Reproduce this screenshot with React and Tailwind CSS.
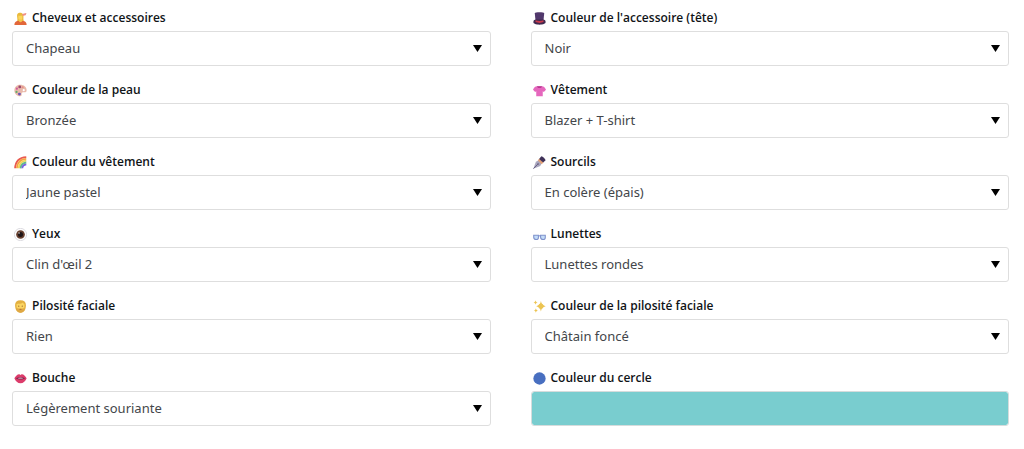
import { useId, useState } from "react";

function Icon({ children }) {
  return (
    <svg viewBox="0 0 36 36" className="size-[13px] shrink-0" aria-hidden="true">{children}</svg>
  );
}

function HaircutIcon() {
  return (
    <Icon>
      <path d="M1 36c0-8 4-11 10-12h14c6 1 10 4 10 12z" fill="#e2673a" />
      <path d="M9 6c4-6 14-5 16 1 2 5 1 9 1 13l1 5H9c2-6-2-14 0-19z" fill="#e9b93c" />
      <path d="M12 10c3 1 9 1 11-1v8c0 4-2 6-5 6s-6-3-6-6z" fill="#fbd65b" />
      <path d="M14 21h8v5c-2 3-6 3-8 0z" fill="#f3c64f" />
      <path d="M23 7l11-3M24 10l9-3" stroke="#ef8f86" strokeWidth="3" />
    </Icon>
  );
}

function HatIcon() {
  return (
    <Icon>
      <path d="M5 4c0-4 26-4 26 0l-2 20H7z" fill="#51386c" />
      <path d="M1 28c0-5 4-7 7-7h20c3 0 7 2 7 7 0 5-7 7-17 7S1 33 1 28z" fill="#41294f" />
      <path d="M7 23c6 3 16 3 22 0v5c-6 3-16 3-22 0z" fill="#c93a4d" />
    </Icon>
  );
}

function PaletteIcon() {
  return (
    <Icon>
      <path d="M17 2C7 2 1 9 1 18s7 16 16 16c5 0 4-4 4-7 0-4 3-4 7-4 5 0 7-2 7-6C35 8 27 2 17 2z" fill="#e9b9aa" />
      <circle cx="27" cy="17" r="3" fill="#fff" />
      <circle cx="16" cy="8" r="4" fill="#9c4a6d" />
      <circle cx="8" cy="13" r="3" fill="#d35a9c" />
      <circle cx="7" cy="22" r="3" fill="#63b06b" />
      <circle cx="15" cy="28" r="4" fill="#6c55b5" />
      <circle cx="24" cy="9" r="3" fill="#e58f85" />
    </Icon>
  );
}

function ShirtIcon() {
  return (
    <Icon>
      <path d="M11 6C6 6 2 10 0 16l6 6 3-2v14h18V20l3 2 6-6c-2-6-6-10-11-10z" fill="#e567bd" />
      <path d="M11 6c1 7 13 7 14 0z" fill="#b83791" />
    </Icon>
  );
}

function RainbowIcon() {
  return (
    <Icon>
      <g fill="none" strokeWidth="5">
        <path d="M3 34C4 15 15 4 34 3" stroke="#e95a50" />
        <path d="M8 34C9 18 18 9 34 8" stroke="#f5a443" />
        <path d="M13 34c1-12 9-20 21-21" stroke="#f0d455" />
        <path d="M18 34c1-9 7-15 16-16" stroke="#62bc8a" />
        <path d="M23 34c0-7 5-10 11-11" stroke="#7a63e0" />
      </g>
    </Icon>
  );
}

function PenIcon() {
  return (
    <Icon>
      <path d="M1 35l7-19 8-4 8 8-4 8z" fill="#a9a6bd" />
      <path d="M1 35l12-12" stroke="#51466e" strokeWidth="2" />
      <circle cx="14" cy="22" r="2" fill="#51466e" />
      <path d="M13 12l5-5 11 11-5 5z" fill="#e3a176" />
      <path d="M17 8l6-7c5 1 10 6 12 11l-7 6z" fill="#3f3158" />
    </Icon>
  );
}

function EyeIcon() {
  return (
    <Icon>
      <circle cx="18" cy="18" r="17" fill="#fff" stroke="#d0ced5" strokeWidth="2" />
      <circle cx="18" cy="18" r="12" fill="#68402f" />
      <circle cx="18" cy="18" r="7" fill="#1d1517" />
      <circle cx="14" cy="14" r="2" fill="#eee4df" />
    </Icon>
  );
}

function GlassesIcon() {
  return (
    <Icon>
      <g fill="#c3dcf8" stroke="#7f92cc" strokeWidth="3">
        <path d="M2 20h13v6c0 8-12 8-13 0z" />
        <path d="M21 20h13v6c0 8-12 8-13 0z" />
        <path d="M15 23c1-2 5-2 6 0" fill="none" />
      </g>
    </Icon>
  );
}

function BeardIcon() {
  return (
    <Icon>
      <path d="M18 1C8 1 3 6 3 14c0 12 4 21 15 21s15-9 15-21C33 6 28 1 18 1z" fill="#e3b041" />
      <path d="M7 11c6 0 15-1 18-4 1 3 3 4 4 5v10c-2 9-20 9-22 0z" fill="#fbd562" />
      <path d="M6 20c3 4 7 4 12 3 5 1 9 1 12-3 0 9-4 15-12 15S6 29 6 20z" fill="#dfa844" />
      <circle cx="13" cy="17" r="2" fill="#a5773d" />
      <circle cx="23" cy="17" r="2" fill="#a5773d" />
      <path d="M14 25c2 3 6 3 8 0z" fill="#a35f3a" />
    </Icon>
  );
}

function SparklesIcon() {
  return (
    <Icon>
      <g fill="#ecc452">
        <path d="M22 2c2 10 4 12 13 15-9 3-11 5-13 15-2-10-4-12-13-15 9-3 11-5 13-15z" />
        <path d="M7 1c1 4 2 5 6 6-4 1-5 2-6 6-1-4-2-5-6-6 4-1 5-2 6-6z" />
        <path d="M8 23c1 4 2 5 6 6-4 1-5 2-6 6-1-4-2-5-6-6 4-1 5-2 6-6z" />
        <circle cx="22" cy="17" r="7" />
      </g>
    </Icon>
  );
}

function MouthIcon() {
  return (
    <Icon>
      <path d="M1 17C5 11 10 5 15 6l3 2 3-2c5-1 10 5 14 11-3 8-9 14-17 14S4 25 1 17z" fill="#dc3c6b" />
      <path d="M5 17c8-3 18-3 26 0-7 5-19 5-26 0z" fill="#7a2546" />
      <path d="M10 17c5-2 11-2 16 0-5 2-11 2-16 0z" fill="#cfa3bb" />
    </Icon>
  );
}

function CircleIcon() {
  return (
    <Icon>
      <circle cx="18" cy="18" r="17" fill="#486fc0" />
    </Icon>
  );
}

const FIELDS = [
  { name: "hair", label: "Cheveux et accessoires", value: "Chapeau", icon: HaircutIcon },
  { name: "hatColor", label: "Couleur de l'accessoire (tête)", value: "Noir", icon: HatIcon },
  { name: "skin", label: "Couleur de la peau", value: "Bronzée", icon: PaletteIcon },
  { name: "clothes", label: "Vêtement", value: "Blazer + T-shirt", icon: ShirtIcon },
  { name: "clothesColor", label: "Couleur du vêtement", value: "Jaune pastel", icon: RainbowIcon },
  { name: "eyebrows", label: "Sourcils", value: "En colère (épais)", icon: PenIcon },
  { name: "eyes", label: "Yeux", value: "Clin d'œil 2", icon: EyeIcon },
  { name: "glasses", label: "Lunettes", value: "Lunettes rondes", icon: GlassesIcon },
  { name: "facialHair", label: "Pilosité faciale", value: "Rien", icon: BeardIcon },
  { name: "facialHairColor", label: "Couleur de la pilosité faciale", value: "Châtain foncé", icon: SparklesIcon },
  { name: "mouth", label: "Bouche", value: "Légèrement souriante", icon: MouthIcon }
];

function FieldLabel({ htmlFor, icon: FieldIcon, children }) {
  return (
    <label htmlFor={htmlFor} className="mb-[3px] flex items-center gap-[5px] px-0.5 font-['Open_Sans','Noto_Sans',sans-serif] text-[12px] leading-5 font-semibold text-[#101417]">
      <FieldIcon />
      <span>{children}</span>
    </label>
  );
}

function SelectField({ name, label, value, icon }) {
  const id = useId();
  return (
    <div>
      <FieldLabel htmlFor={id} icon={icon}>{label}</FieldLabel>
      <div className="relative">
        <select id={id} name={name} defaultValue={value}
          className="block h-[35px] w-full appearance-none rounded-[3px] border border-[#dedede] bg-white pr-8 pl-[13px] text-[13px] text-[#43464a]">
          <option value={value}>{value}</option>
        </select>
        <svg viewBox="0 0 18 14" className="pointer-events-none absolute top-[14px] right-[9px] h-[7px] w-[9px]" aria-hidden="true">
          <path d="M0 0h18L9 14z" fill="#000" />
        </svg>
      </div>
    </div>
  );
}

function ColorField({ name, label, icon }) {
  const id = useId();
  const [color, setColor] = useState("#79cdcf");
  return (
    <div>
      <FieldLabel htmlFor={id} icon={icon}>{label}</FieldLabel>
      <input id={id} name={name} type="color" value={color} onChange={e => setColor(e.target.value)}
        className="block h-[35px] w-full appearance-none rounded-[3px] border border-[#d6dcdc] p-0 [&::-webkit-color-swatch]:rounded-xs [&::-webkit-color-swatch]:border-0 [&::-webkit-color-swatch-wrapper]:p-0" />
    </div>
  );
}

export default function App() {
  return (
    <form className="grid grid-cols-2 gap-x-10 gap-y-[14px] bg-white pt-2 pr-[15px] pb-6 pl-3 font-['Noto_Sans','Open_Sans',sans-serif]">
      {FIELDS.map(field => <SelectField key={field.name} {...field} />)}
      <ColorField name="circleColor" label="Couleur du cercle" icon={CircleIcon} />
    </form>
  );
}
